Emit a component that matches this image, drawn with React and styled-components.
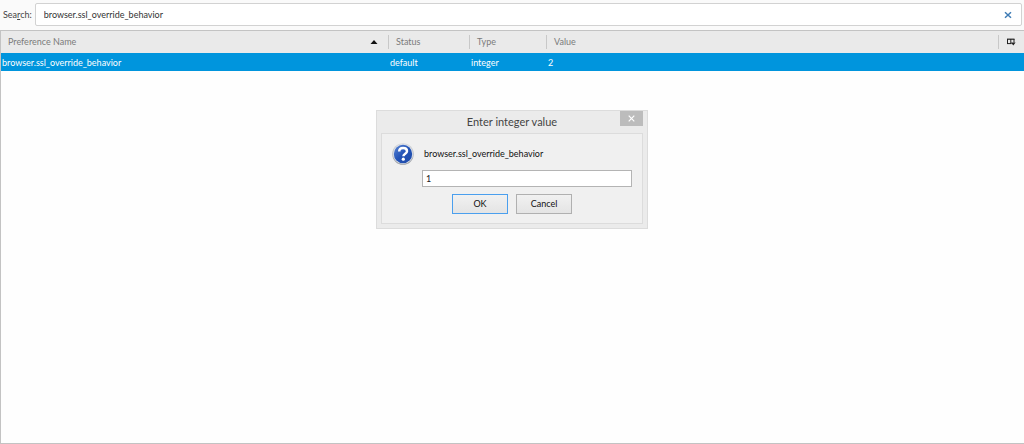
import React, { useState } from "react";
import styled, { createGlobalStyle } from "styled-components";

const preferences = [
  {
    name: "browser.ssl_override_behavior",
    status: "default",
    type: "integer",
    value: "2",
  },
];

const App = () => {
  const [search, setSearch] = useState("browser.ssl_override_behavior");
  const [value, setValue] = useState("1");
  const [open, setOpen] = useState(true);

  const handleClose = () => {
    setOpen(false);
  };

  return (
    <Page>
      <GlobalStyle />
      <Toolbar>
        <SearchLabel htmlFor="search">
          Sea<u>r</u>ch:
        </SearchLabel>
        <SearchBox>
          <SearchInput
            id="search"
            value={search}
            onChange={(e) => setSearch(e.target.value)}
          />
          <ClearButton aria-label="Clear" onClick={() => setSearch("")}>
            <ClearIcon />
          </ClearButton>
        </SearchBox>
      </Toolbar>

      <Tree>
        <Table>
          <colgroup>
            <Col $width="388px" />
            <Col $width="81px" />
            <Col $width="77px" />
            <Col />
            <Col $width="25px" />
          </colgroup>
          <thead>
            <tr>
              <HeaderCell>
                <HeaderContent>
                  Preference Name
                  <SortIcon />
                </HeaderContent>
              </HeaderCell>
              <HeaderCell>
                <HeaderContent>Status</HeaderContent>
              </HeaderCell>
              <HeaderCell>
                <HeaderContent>Type</HeaderContent>
              </HeaderCell>
              <HeaderCell>
                <HeaderContent>Value</HeaderContent>
              </HeaderCell>
              <HeaderCell>
                <PickerButton aria-label="Select columns to display">
                  <PickerIcon />
                </PickerButton>
              </HeaderCell>
            </tr>
          </thead>
          <tbody>
            {preferences.map((pref) => (
              <Row key={pref.name}>
                <Cell>{pref.name}</Cell>
                <Cell>{pref.status}</Cell>
                <Cell>{pref.type}</Cell>
                <Cell colSpan={2}>{pref.value}</Cell>
              </Row>
            ))}
          </tbody>
        </Table>
      </Tree>

      {open && (
        <Overlay>
          <Dialog role="dialog" aria-labelledby="dialog-title">
            <TitleBar>
              <Title id="dialog-title">Enter integer value</Title>
              <CloseButton aria-label="Close" onClick={handleClose}>
                <CloseIcon />
              </CloseButton>
            </TitleBar>
            <DialogBody>
              <Prompt>
                <QuestionIcon />
                <PromptLabel htmlFor="value">
                  browser.ssl_override_behavior
                </PromptLabel>
              </Prompt>
              <ValueInput
                id="value"
                value={value}
                onChange={(e) => setValue(e.target.value)}
              />
              <Actions>
                <DialogButton $primary onClick={handleClose}>
                  OK
                </DialogButton>
                <DialogButton onClick={handleClose}>Cancel</DialogButton>
              </Actions>
            </DialogBody>
          </Dialog>
        </Overlay>
      )}
    </Page>
  );
};

export default App;

const ClearIcon = () => (
  <svg width="8" height="8" viewBox="0 0 8 8" aria-hidden="true">
    <path d="M1 1.2 7 6.8M7 1.2 1 6.8" stroke="#3f7cb5" strokeWidth="1.5" />
  </svg>
);

const SortIcon = () => (
  <svg width="8" height="4" viewBox="0 0 8 4" aria-hidden="true">
    <path d="M4 0 7.5 4H0.5z" fill="#111" />
  </svg>
);

const PickerIcon = () => (
  <svg width="9" height="8" viewBox="0 0 9 8" aria-hidden="true">
    <path
      d="M0.5 1V6M3.8 1V6M7 1V4.5M0 5.6H4.5"
      fill="none"
      stroke="#222"
      strokeWidth="1"
    />
    <path d="M0 0.6H7.5V1.8H0z" fill="#222" />
    <path d="M4 4.6H8.6L6.3 7.6z" fill="#222" />
  </svg>
);

const CloseIcon = () => (
  <svg width="7" height="7" viewBox="0 0 7 7" aria-hidden="true">
    <path d="M0.7 0.7 6.3 6.3M6.3 0.7 0.7 6.3" stroke="#fff" strokeWidth="1.2" />
  </svg>
);

const QuestionIcon = () => (
  <svg width="22" height="22" viewBox="0 0 22 22" aria-hidden="true">
    <defs>
      <linearGradient id="ring" x1="0" y1="0" x2="0" y2="1">
        <stop offset="0" stopColor="#d8dade" />
        <stop offset="1" stopColor="#9a9ea5" />
      </linearGradient>
      <linearGradient id="ball" x1="0" y1="0" x2="1" y2="1">
        <stop offset="0" stopColor="#5b86d6" />
        <stop offset="0.5" stopColor="#2353b6" />
        <stop offset="1" stopColor="#1f4ba8" />
      </linearGradient>
    </defs>
    <circle cx="11" cy="11" r="10.8" fill="url(#ring)" />
    <circle cx="11" cy="11" r="10" fill="#dfe4ec" />
    <circle cx="11" cy="11" r="9.2" fill="url(#ball)" />
    <path
      d="M7.2 8.6C7.2 6.2 8.9 5 11.1 5C13.4 5 15 6.3 15 8.2C15 10.8 11.4 10.6 11.4 13.3"
      fill="none"
      stroke="#fff"
      strokeWidth="2.5"
    />
    <circle cx="11.3" cy="16.2" r="1.6" fill="#fff" />
  </svg>
);

const GlobalStyle = createGlobalStyle`
  * {
    box-sizing: border-box;
  }

  body {
    margin: 0;
    background: #fefefe;
  }

  body,
  button,
  input {
    font-family: Lato, "Open Sans", sans-serif;
    font-size: 9px;
    line-height: 12px;
  }
`;

const Page = styled.div`
  min-height: 100vh;
  display: flex;
  flex-direction: column;
`;

const Toolbar = styled.div`
  display: flex;
  align-items: center;
  gap: 3px;
  padding: 3px 2px 4px 3px;
  background: #fafafa;
`;

const SearchLabel = styled.label`
  color: #444;
`;

const SearchBox = styled.div`
  flex: 1;
  height: 23px;
  display: flex;
  align-items: center;
  padding: 0 7px 0 8px;
  border: 1px solid #d2d2d2;
  border-radius: 2px;
  background: #fff;
`;

const SearchInput = styled.input`
  flex: 1;
  padding: 0;
  border: none;
  outline: none;
  background: none;
  color: #333;
`;

const ClearButton = styled.button`
  display: flex;
  padding: 2px;
  border: none;
  background: none;
`;

const Tree = styled.div`
  flex: 1;
  border: 1px solid #c3c3c3;
  border-right: none;
`;

const Table = styled.table`
  width: 100%;
  table-layout: fixed;
  border-collapse: collapse;
`;

const Col = styled.col`
  width: ${(props) => props.$width || "auto"};
`;

const HeaderCell = styled.th`
  height: 22px;
  padding: 0;
  background: #eaeaea;
  color: #7b7b7b;
  font-weight: normal;
  text-align: left;
`;

const HeaderContent = styled.div`
  display: flex;
  align-items: center;
  justify-content: space-between;
  height: 14px;
  padding: 0 10px 0 7px;
  border-right: 1px solid #c8c8c8;
`;

const PickerButton = styled.button`
  display: flex;
  padding: 0 8px;
  border: none;
  background: none;
`;

const Row = styled.tr`
  background: #0095dd;
  color: #fff;
`;

const Cell = styled.td`
  height: 18px;
  padding: 1px 1px 0;
`;

const Overlay = styled.div`
  position: fixed;
  inset: 0;
  display: flex;
  justify-content: center;
  align-items: flex-start;
  padding-top: 110px;
`;

const Dialog = styled.div`
  width: 272px;
  padding: 0 4px 4px;
  border: 1px solid #dcdcdc;
  background: #ebebeb;
`;

const TitleBar = styled.div`
  display: grid;
  grid-template-columns: 23px 1fr 23px;
  align-items: start;
  height: 22px;
`;

const Title = styled.h1`
  grid-column: 2;
  margin: 0;
  color: #444;
  font-size: 11px;
  font-weight: normal;
  line-height: 22px;
  text-align: center;
`;

const CloseButton = styled.button`
  display: flex;
  align-items: center;
  justify-content: center;
  height: 15px;
  padding: 0;
  border: none;
  background: #bcbcbc;
`;

const DialogBody = styled.div`
  padding: 9px 10px;
  border: 1px solid #dcdcdc;
  background: #f0f0f0;
`;

const Prompt = styled.div`
  display: flex;
  align-items: center;
  gap: 10px;
`;

const PromptLabel = styled.label`
  color: #111;
`;

const ValueInput = styled.input`
  display: block;
  width: 210px;
  height: 17px;
  margin: 5px 0 7px auto;
  padding: 0 3px;
  border: 1px solid #b4b4b4;
  outline: none;
  background: #fff;
  color: #222;
`;

const Actions = styled.div`
  display: flex;
  justify-content: center;
  gap: 8px;
`;

const DialogButton = styled.button`
  width: 56px;
  height: 20px;
  padding: 0;
  border: 1px solid ${(props) => (props.$primary ? "#4a9fee" : "#b0b0b0")};
  background: linear-gradient(#f1f1f1, #e4e4e4);
  color: #111;
`;
